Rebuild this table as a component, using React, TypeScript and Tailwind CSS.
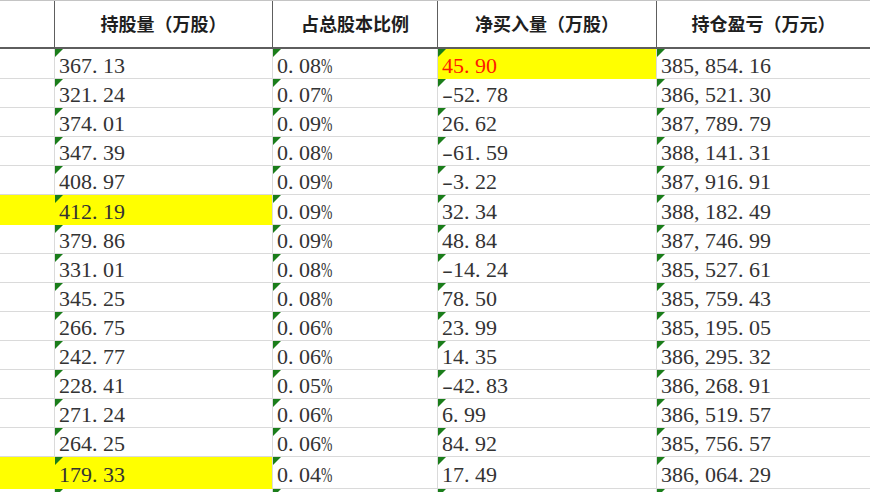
const rows: string[][] = [
  ["367.13", "0.08%", "45.90", "385,854.16"],
  ["321.24", "0.07%", "-52.78", "386,521.30"],
  ["374.01", "0.09%", "26.62", "387,789.79"],
  ["347.39", "0.08%", "-61.59", "388,141.31"],
  ["408.97", "0.09%", "-3.22", "387,916.91"],
  ["412.19", "0.09%", "32.34", "388,182.49"],
  ["379.86", "0.09%", "48.84", "387,746.99"],
  ["331.01", "0.08%", "-14.24", "385,527.61"],
  ["345.25", "0.08%", "78.50", "385,759.43"],
  ["266.75", "0.06%", "23.99", "385,195.05"],
  ["242.77", "0.06%", "14.35", "386,295.32"],
  ["228.41", "0.05%", "-42.83", "386,268.91"],
  ["271.24", "0.06%", "6.99", "386,519.57"],
  ["264.25", "0.06%", "84.92", "385,756.57"],
  ["179.33", "0.04%", "17.49", "386,064.29"],
  ["", "", "", ""],
];

// row heights incl. bottom gridline
const heights = [30, 29, 29, 29, 29, 30, 29, 29, 29, 29, 29, 29, 29, 29, 32, 29];
const yellowLeft = [5, 14];

const headers = ["持股量（万股）", "占总股本比例", "净买入量（万股）", "持仓盈亏（万元）"];

// SimSun-style half-width punctuation
function Num({ value }: { value: string }) {
  return (
    <>
      {value.split("").map((c, i) => {
        if (c === "-")
          return (
            <span key={i} className="inline-block w-[11px]">
              <span className="inline-block origin-left scale-x-[1.5]">-</span>
            </span>
          );
        if (c === "%")
          return (
            <span key={i} className="inline-block w-[11px]">
              <span className="inline-block origin-left scale-x-[0.62]">%</span>
            </span>
          );
        if (c === "." || c === ",")
          return (
            <span key={i} className="inline-block w-[11px]">
              {c}
            </span>
          );
        return <span key={i}>{c}</span>;
      })}
    </>
  );
}

function Flag() {
  return <div className="absolute left-0 top-0 h-[8px] w-[8px] bg-[#1a7d1a] [clip-path:polygon(0_0,100%_0,0_100%)]" />;
}

export default function App() {
  return (
    <div className="h-[492px] w-[870px] overflow-hidden bg-white">
      {/* header */}
      <div className="grid h-[49px] grid-cols-[55px_218px_165px_219px_1fr] border-t border-b-2 border-t-[#c4c4c4] border-b-[#5e5e5e] font-['Noto_Sans_CJK_SC',sans-serif] text-[18px] font-bold text-[#1f1f1f]">
        <div className="border-r border-[#5e5e5e]" />
        {headers.map((h, i) => (
          <div
            key={h}
            className={`flex items-center justify-center pb-[2px] ${i < 3 ? "border-r border-[#5e5e5e]" : ""}`}
          >
            {h}
          </div>
        ))}
      </div>

      {/* body */}
      {rows.map((r, ri) => {
        const yl = yellowLeft.includes(ri);
        return (
          <div
            key={ri}
            style={{ height: heights[ri] }}
            className="grid grid-cols-[55px_218px_165px_219px_1fr] font-['Liberation_Serif',serif] text-[22px] leading-none text-[#333]"
          >
            <div className={`border-b border-r ${yl ? "border-r-[#ffff00] border-b-[#ffff00] bg-[#ffff00]" : "border-[#dadada]"}`} />
            {r.map((v, ci) => {
              const yellow = (yl && ci === 0) || (ri === 0 && ci === 2);
              const red = ri === 0 && ci === 2;
              return (
                <div
                  key={ci}
                  className={`relative flex items-center pl-[4px] pt-[4px] ${ci < 3 ? "border-r" : ""} border-b border-[#dadada] ${
                    yellow ? "bg-[#ffff00]" : ""
                  } ${red ? "text-[#ff1a00]" : ""} ${yellow ? "border-b-[#ffff00]" : ""}`}
                >
                  <Flag />
                  <span className="whitespace-nowrap">
                    <Num value={v} />
                  </span>
                </div>
              );
            })}
          </div>
        );
      })}
    </div>
  );
}
